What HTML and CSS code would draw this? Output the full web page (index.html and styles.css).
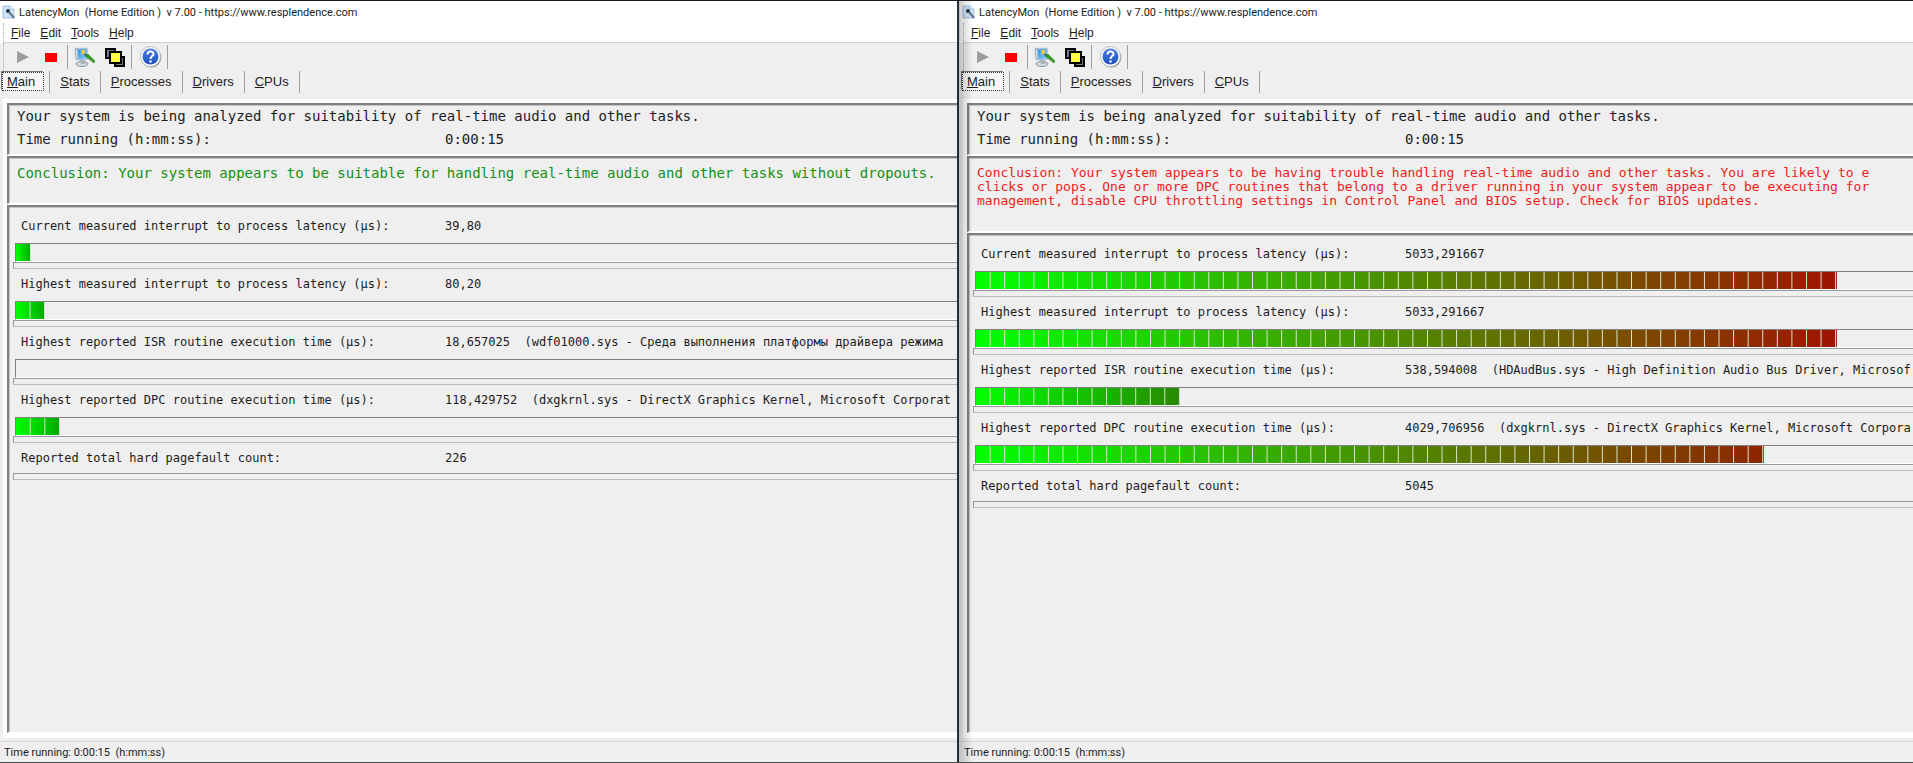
FILE: index.html
```
<!DOCTYPE html>
<html lang="en">

<head>
	<meta charset="utf-8">
	<title>LatencyMon</title>
	<link rel="stylesheet" href="styles.css">
</head>

<body>
	<!-- shared icons -->
	<svg class="sprite" aria-hidden="true">
		<defs>
			<linearGradient id="screen" x1="0" y1="0" x2="1" y2="1">
				<stop offset="0" stop-color="#2f8fe0"></stop>
				<stop offset="1" stop-color="#8fd4fb"></stop>
			</linearGradient>
			<linearGradient id="ball" x1="0" y1="0" x2="0" y2="1">
				<stop offset="0" stop-color="#4a7fe0"></stop>
				<stop offset="1" stop-color="#1f50c0"></stop>
			</linearGradient>
		</defs>
		<symbol id="i-app" viewBox="0 0 13 14">
			<path d="M1 1h7l4 3v9H1z" fill="#cfe4f7" stroke="#9fc0de"></path>
			<path d="M8 1v3h4" fill="#fff" stroke="#9fc0de"></path>
			<circle cx="6" cy="6" r="2" fill="#234"></circle>
			<path d="M7 7l5 6" stroke="#678" stroke-width="2"></path>
		</symbol>
		<symbol id="i-play" viewBox="0 0 12 12">
			<path d="M0 0l12 6L0 12z" fill="#9d9d9d"></path>
		</symbol>
		<symbol id="i-stop" viewBox="0 0 12 9">
			<path d="M0 0h12v9H0z" fill="#f00"></path>
		</symbol>
		<symbol id="i-monitor" viewBox="0 0 22 20">
			<ellipse cx="8" cy="17" rx="6" ry="2.500" fill="#d5dae2" stroke="#8a93a3"></ellipse>
			<path d="M6 12l5-1v6H7z" fill="#aab3c0"></path>
			<path d="M1 2l3-1v12l-2-1z" fill="#dfe5ee" stroke="#9aa5b8"></path>
			<path d="M3 2l10-1 1 11-10 1z" fill="url(#screen)" stroke="#b5c3d6"></path>
			<path d="M7 3l4 0 0 3-3 2z" fill="#ffc93e"></path>
			<path d="M9 7l4 0 0 3z" fill="#46566a"></path>
			<path d="M11 9l3-2 7 7-1 2z" fill="#3c9a2c" stroke="#2b7a20" stroke-width=".5"></path>
		</symbol>
		<symbol id="i-layers" viewBox="0 0 20 19">
			<path d="M1 1h9v9H1zM10 9h9v9h-9z" fill="#777" stroke="#000" stroke-width="2"></path>
			<path d="M5 4h11v11H5z" fill="#ffff45" stroke="#000" stroke-width="2"></path>
		</symbol>
		<symbol id="i-help" viewBox="0 0 22 22">
			<circle cx="11.500" cy="11.500" r="10" fill="#999"></circle>
			<circle cx="10.500" cy="10.500" r="10" fill="#fff" stroke="#b5bccb"></circle>
			<circle cx="10.500" cy="10.500" r="8" fill="url(#ball)"></circle>
			<path d="M7.500 8.500c0-4 6-4 6-.500 0 2-3 2.200-3 5" fill="none" stroke="#fff" stroke-width="2"></path>
			<circle cx="10.500" cy="15.500" r="1.300" fill="#fff"></circle>
		</symbol>
	</svg>

	<div class="desktop">
		<section class="window">
			<header class="titlebar">
				<svg class="app-icon" aria-hidden="true"><use href="#i-app"></use></svg>
				<span class="title">LatencyMon&nbsp; (Home Edition )&nbsp; v 7.00 - https://www.resplendence.com</span>
			</header>
			<nav class="menubar">
				<button class="menu"><u>F</u>ile</button>
				<button class="menu"><u>E</u>dit</button>
				<button class="menu"><u>T</u>ools</button>
				<button class="menu"><u>H</u>elp</button>
			</nav>
			<div class="toolbar">
				<div class="group transport">
					<button class="tool" aria-label="Start"><svg width="12" height="12"><use href="#i-play"></use></svg></button>
					<button class="tool" aria-label="Stop"><svg width="12" height="9"><use href="#i-stop"></use></svg></button>
				</div>
				<div class="group">
					<button class="tool" aria-label="Options"><svg width="22" height="20"><use href="#i-monitor"></use></svg></button>
					<button class="tool" aria-label="Windows"><svg width="20" height="19"><use href="#i-layers"></use></svg></button>
				</div>
				<div class="group help">
					<button class="tool" aria-label="Help"><svg width="22" height="22"><use href="#i-help"></use></svg></button>
				</div>
			</div>
			<nav class="tabs">
				<button class="tab active"><span><u>M</u>ain</span></button>
				<button class="tab"><u>S</u>tats</button>
				<button class="tab"><u>P</u>rocesses</button>
				<button class="tab"><u>D</u>rivers</button>
				<button class="tab"><u>C</u>PUs</button>
			</nav>
			<main class="client">
				<div class="box summary">
					<p>Your system is being analyzed for suitability of real-time audio and other tasks.</p>
					<p class="pair"><span>Time running (h:mm:ss):</span><span>0:00:15</span></p>
				</div>
				<div class="box conclusion good">
					<p>Conclusion: Your system appears to be suitable for handling real-time audio and other tasks without dropouts.</p>
				</div>
				<div class="box readings">
					<div class="reading">
						<p class="pair"><span>Current measured interrupt to process latency (µs):</span><span>39,80</span></p>
						<div class="track"><div class="bar short" style="--n: 1"></div></div>
						<div class="groove"></div>
					</div>
					<div class="reading">
						<p class="pair"><span>Highest measured interrupt to process latency (µs):</span><span>80,20</span></p>
						<div class="track"><div class="bar short" style="--n: 2"></div></div>
						<div class="groove"></div>
					</div>
					<div class="reading">
						<p class="pair"><span>Highest reported ISR routine execution time (µs):</span><span>18,657025&nbsp; (wdf01000.sys - Среда выполнения платформы драйвера режима</span></p>
						<div class="track"></div>
						<div class="groove"></div>
					</div>
					<div class="reading">
						<p class="pair"><span>Highest reported DPC routine execution time (µs):</span><span>118,429752&nbsp; (dxgkrnl.sys - DirectX Graphics Kernel, Microsoft Corporat</span></p>
						<div class="track"><div class="bar short" style="--n: 3"></div></div>
						<div class="groove"></div>
					</div>
					<div class="reading total">
						<p class="pair"><span>Reported total hard pagefault count:</span><span>226</span></p>
						<div class="groove"></div>
					</div>
				</div>
			</main>
			<footer class="statusbar">Time running: 0:00:15&nbsp; (h:mm:ss)</footer>
		</section>

		<section class="window front">
			<header class="titlebar">
				<svg class="app-icon" aria-hidden="true"><use href="#i-app"></use></svg>
				<span class="title">LatencyMon&nbsp; (Home Edition )&nbsp; v 7.00 - https://www.resplendence.com</span>
			</header>
			<nav class="menubar">
				<button class="menu"><u>F</u>ile</button>
				<button class="menu"><u>E</u>dit</button>
				<button class="menu"><u>T</u>ools</button>
				<button class="menu"><u>H</u>elp</button>
			</nav>
			<div class="toolbar">
				<div class="group transport">
					<button class="tool" aria-label="Start"><svg width="12" height="12"><use href="#i-play"></use></svg></button>
					<button class="tool" aria-label="Stop"><svg width="12" height="9"><use href="#i-stop"></use></svg></button>
				</div>
				<div class="group">
					<button class="tool" aria-label="Options"><svg width="22" height="20"><use href="#i-monitor"></use></svg></button>
					<button class="tool" aria-label="Windows"><svg width="20" height="19"><use href="#i-layers"></use></svg></button>
				</div>
				<div class="group help">
					<button class="tool" aria-label="Help"><svg width="22" height="22"><use href="#i-help"></use></svg></button>
				</div>
			</div>
			<nav class="tabs">
				<button class="tab active"><span><u>M</u>ain</span></button>
				<button class="tab"><u>S</u>tats</button>
				<button class="tab"><u>P</u>rocesses</button>
				<button class="tab"><u>D</u>rivers</button>
				<button class="tab"><u>C</u>PUs</button>
			</nav>
			<main class="client">
				<div class="box summary">
					<p>Your system is being analyzed for suitability of real-time audio and other tasks.</p>
					<p class="pair"><span>Time running (h:mm:ss):</span><span>0:00:15</span></p>
				</div>
				<div class="box conclusion bad">
					<p>Conclusion: Your system appears to be having trouble handling real-time audio and other tasks. You are likely to e<br>
						clicks or pops. One or more DPC routines that belong to a driver running in your system appear to be executing for<br>
						management, disable CPU throttling settings in Control Panel and BIOS setup. Check for BIOS updates.</p>
				</div>
				<div class="box readings">
					<div class="reading">
						<p class="pair"><span>Current measured interrupt to process latency (µs):</span><span>5033,291667</span></p>
						<div class="track"><div class="bar" style="--n: 59"></div></div>
						<div class="groove"></div>
					</div>
					<div class="reading">
						<p class="pair"><span>Highest measured interrupt to process latency (µs):</span><span>5033,291667</span></p>
						<div class="track"><div class="bar" style="--n: 59"></div></div>
						<div class="groove"></div>
					</div>
					<div class="reading">
						<p class="pair"><span>Highest reported ISR routine execution time (µs):</span><span>538,594008&nbsp; (HDAudBus.sys - High Definition Audio Bus Driver, Microsof</span></p>
						<div class="track"><div class="bar medium" style="--n: 14"></div></div>
						<div class="groove"></div>
					</div>
					<div class="reading">
						<p class="pair"><span>Highest reported DPC routine execution time (µs):</span><span>4029,706956&nbsp; (dxgkrnl.sys - DirectX Graphics Kernel, Microsoft Corpora</span></p>
						<div class="track"><div class="bar long" style="--n: 54"></div></div>
						<div class="groove"></div>
					</div>
					<div class="reading total">
						<p class="pair"><span>Reported total hard pagefault count:</span><span>5045</span></p>
						<div class="groove"></div>
					</div>
				</div>
			</main>
			<footer class="statusbar">Time running: 0:00:15&nbsp; (h:mm:ss)</footer>
		</section>
	</div>
</body>

</html>
```
FILE: styles.css
```
* {
	box-sizing: border-box;
}

body {
	margin: 0;
	background: #efefef;
	color: #1c1c1c;
	font-family: "Liberation Sans", Arial, sans-serif;
}

p {
	margin: 0;
}

button {
	margin: 0;
	padding: 0;
	border: 0;
	background: none;
	color: inherit;
	font: inherit;
}

.sprite {
	position: absolute;
	width: 0;
	height: 0;
}

.desktop {
	display: grid;
	grid-template-columns: 957fr 956fr;
	height: 100vh;
	border-top: 1px solid #1b1b1f;
	border-bottom: 1px solid #4a5050;
}

.window {
	display: flex;
	flex-direction: column;
	min-width: 0;
	overflow: hidden;
	background: #efefef;
}

.front {
	position: relative;
	border-left: 2px solid #253038;
	padding-left: 1px;
}

/* shade along the window edge */
.front::after {
	content: "";
	position: absolute;
	top: 0;
	bottom: 0;
	left: 0;
	width: 14px;
	background: linear-gradient(90deg, rgba(0, 0, 0, .2), rgba(0, 0, 0, 0));
	pointer-events: none;
}

.titlebar {
	display: flex;
	align-items: center;
	gap: 4px;
	height: 22px;
	padding-left: 2px;
	background: #fff;
	font: 11px Roboto, "Noto Sans", sans-serif;
	white-space: nowrap;
}

.app-icon {
	width: 13px;
	height: 14px;
}

.menubar {
	display: flex;
	gap: 10px;
	height: 20px;
	margin-left: 3px;
	padding-left: 7px;
	border-left: 1px dotted #aaa;
	border-bottom: 1px solid #d0d0d0;
	background: #fff;
	box-shadow: -3px 0 #fff;
	font-size: 12px;
}

.toolbar {
	display: flex;
	align-items: center;
	height: 28px;
	margin-left: 3px;
	border-left: 1px dotted #aaa;
}

.group {
	display: flex;
	align-items: center;
	gap: 9px;
	height: 24px;
	padding: 0 6px;
	border-right: 1px solid #a0a0a0;
}

.transport {
	gap: 16px;
	padding: 0 10px 0 13px;
}

.help {
	padding: 0 5px 0 8px;
}

.tool svg {
	display: block;
}

.tabs {
	display: flex;
	height: 22px;
	font-size: 13px;
}

.tab {
	padding: 0 10px 2px;
	border-right: 1px solid #a0a0a0;
}

.tab.active {
	padding: 0 5px 2px 2px;
}

.tab.active span {
	display: block;
	padding: 1px 8px 1px 4px;
	border: 1px dotted #333;
	background: #f7f7f7;
	box-shadow: -1px -1px #777;
}

.client {
	display: flex;
	flex: 1;
	flex-direction: column;
	gap: 1px;
	min-height: 0;
	margin: 6px 0 3px 3px;
	padding: 4px 0 5px 4px;
	background: #fff;
	font-family: "DejaVu Sans Mono", "Liberation Mono", monospace;
	white-space: nowrap;
}

.box {
	border-top: 2px solid #808080;
	border-left: 2px solid #808080;
	border-bottom: 1px solid #fff;
	background: #efefef;
	box-shadow: inset 1px 1px #c4c4c4;
}

.pair {
	display: grid;
	grid-template-columns: 424px 1fr;
}

.summary {
	height: 52px;
	padding: 0 8px;
	font-size: 14px;
	line-height: 23px;
}

.summary .pair {
	grid-template-columns: 428px 1fr;
}

.conclusion {
	padding: 8px 8px 23px;
	font-size: 14px;
	line-height: 14px;
}

.good {
	color: #149014;
}

/* long warnings are set smaller */
.bad {
	color: #f01a1a;
	font-size: 13px;
}

.readings {
	flex: 1;
	min-height: 0;
	overflow: hidden;
	padding: 4px 0 0 4px;
	font-size: 12px;
}

.reading .pair {
	padding: 5px 0 7px 8px;
	line-height: 20px;
}

.total .pair {
	padding-bottom: 5px;
}

.track {
	height: 19px;
	margin-left: 2px;
	padding-right: 3px;
	border: 1px solid #808080;
	border-right: 0;
	border-bottom-color: #fff;
}

.groove {
	height: 7px;
	border: 1px solid #999;
	border-right: 0;
	border-bottom-color: #bbb;
}

.bar {
	--end: #a01400;
	width: calc(100% * var(--n) / 64);
	height: 100%;
	background:
		linear-gradient(90deg, transparent calc(100% - 1px), #d8e8d0 0) 0 0 / calc(100% / var(--n)) 100%,
		linear-gradient(90deg, #0f0, var(--end));
}

.bar.short {
	--end: #00a800;
}

.bar.medium {
	--end: #288800;
}

.bar.long {
	--end: #902400;
}

.statusbar {
	height: 21px;
	padding-left: 4px;
	border-top: 1px solid #d6d6d6;
	font: 11px/22px Roboto, "Noto Sans", sans-serif;
}
```
